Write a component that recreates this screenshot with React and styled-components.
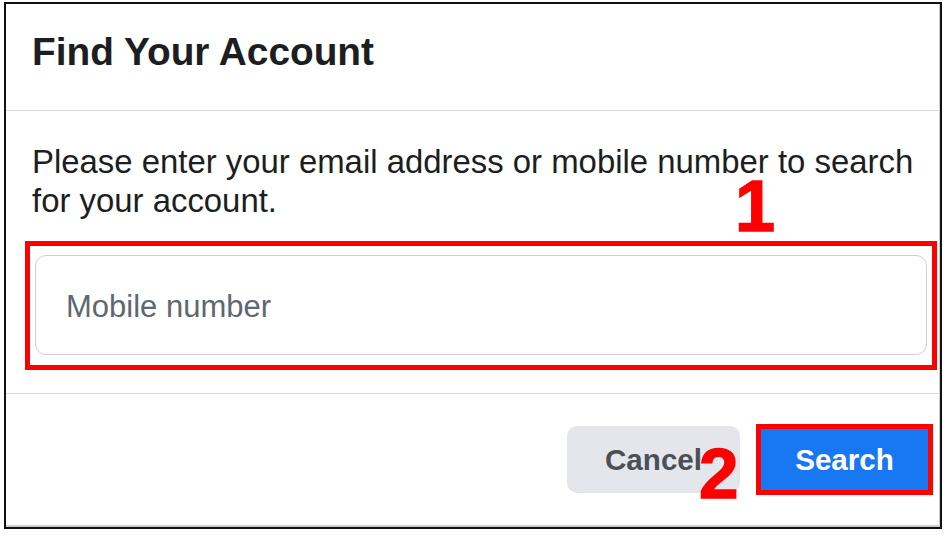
import React from "react";
import styled, { createGlobalStyle } from "styled-components";

const Global = createGlobalStyle`
  html, body { margin: 0; padding: 0; background: #ffffff; }
  body { font-family: "Liberation Sans", Arial, Helvetica, sans-serif; }
  * { box-sizing: border-box; }
`;

const Frame = styled.div`
  position: relative;
  margin: 2px 0 0 4px;
  width: 938px;
  height: 527px;
  border: 2px solid #111111;
  background: #ffffff;
  box-shadow: inset -1px -2px 0 #cfcfcf;
  display: flex;
  flex-direction: column;
  color: #1c1e21;
`;

const Header = styled.div`
  height: 107px;
  display: flex;
  align-items: center;
  padding: 0 24px 10px 26px;
  border-bottom: 1px solid #dadde1;
`;

const Title = styled.h1`
  margin: 0;
  font-size: 38.8px;
  line-height: 46px;
  font-weight: 700;
  color: #1c1e21;
`;

const Body = styled.div`
  padding: 31px 3px 23px 19px;
  border-bottom: 1px solid #dadde1;
`;

const Prompt = styled.p`
  margin: 0 0 0 7px;
  font-size: 32.9px;
  line-height: 39px;
  color: #1c1e21;
`;

const Highlight = styled.div`
  margin-top: 21px;
  border: 5px solid #ff0000;
  padding: 9px 5px 10px 5px;
`;

const Field = styled.input`
  display: block;
  width: 100%;
  height: 100px;
  border: 1px solid #ccd0d5;
  border-radius: 11px;
  padding: 3px 0 0 30px;
  font-family: "Liberation Sans", Arial, Helvetica, sans-serif;
  font-size: 31px;
  color: #1c1e21;
  background: #ffffff;
  outline: none;
  &::placeholder { color: #606770; opacity: 1; }
`;

const Footer = styled.div`
  flex: 1;
  display: flex;
  align-items: center;
  justify-content: flex-end;
  gap: 16px;
  padding: 0 7px 2px 0;
`;

const Button = styled.button`
  font-family: "Liberation Sans", Arial, Helvetica, sans-serif;
  font-weight: 700;
  font-size: 29.6px;
  display: flex;
  align-items: center;
  justify-content: center;
  padding: 0;
  cursor: pointer;
  width: ${(p) => (p.$primary ? "177px" : "173px")};
  height: ${(p) => (p.$primary ? "71px" : "67px")};
  border-radius: ${(p) => (p.$primary ? "0" : "10px")};
  border: ${(p) => (p.$primary ? "5px solid #ff0000" : "none")};
  background: ${(p) => (p.$primary ? "#1877f2" : "#e4e6eb")};
  color: ${(p) => (p.$primary ? "#ffffff" : "#4b4f56")};
`;

const Marker = styled.span`
  position: absolute;
  left: ${(p) => p.$x}px;
  top: ${(p) => p.$y}px;
  font-family: "Liberation Sans", Arial, sans-serif;
  font-weight: 700;
  font-size: ${(p) => p.$size}px;
  line-height: 1;
  color: #ff0000;
  -webkit-text-stroke: 1.5px #ff0000;
  pointer-events: none;
`;

export default function App() {
  return (
    <>
      <Global />
      <Frame>
        <Header>
          <Title>Find Your Account</Title>
        </Header>
        <Body>
          <Prompt>
            Please enter your email address or mobile number to search for your account.
          </Prompt>
          <Highlight>
            <Field type="text" placeholder="Mobile number" />
          </Highlight>
        </Body>
        <Footer>
          <Button>Cancel</Button>
          <Button $primary>Search</Button>
        </Footer>
        <Marker $x={729} $y={166} $size={72}>1</Marker>
        <Marker $x={693} $y={434} $size={71}>2</Marker>
      </Frame>
    </>
  );
}
